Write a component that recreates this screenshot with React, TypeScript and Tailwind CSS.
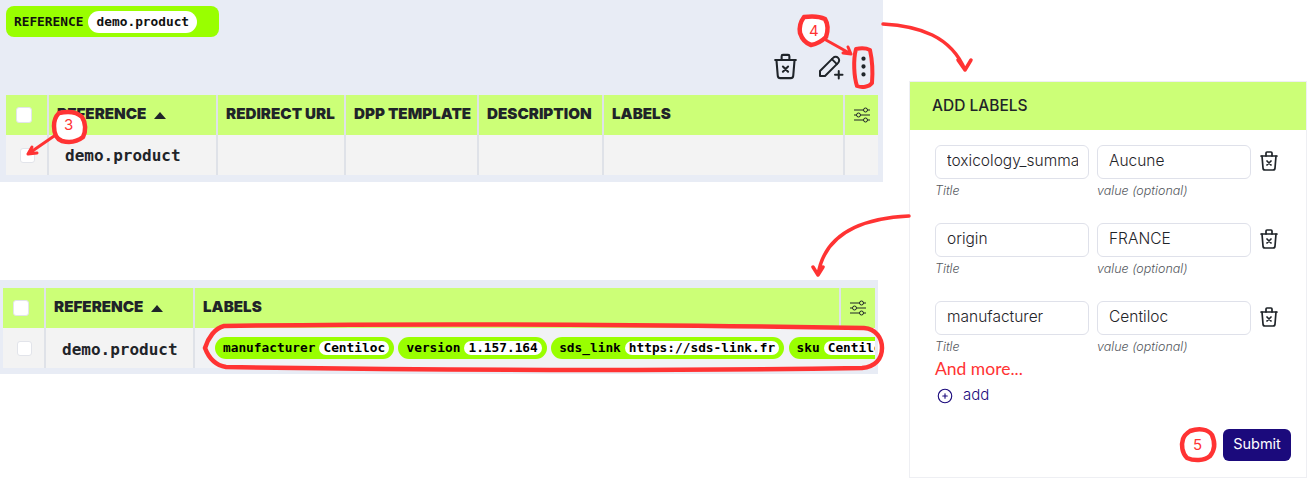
import { TbCirclePlus, TbDotsVertical, TbPencilPlus, TbTrashX } from 'react-icons/tb';

const HEADER_FONT = "font-['Inter',sans-serif] font-black text-[15.2px] text-[#1f2429]";
const MONO_FONT = "font-['DejaVu_Sans_Mono',monospace] font-bold";

const fields = [
  { title: 'toxicology_summary', value: 'Aucune' },
  { title: 'origin', value: 'FRANCE' },
  { title: 'manufacturer', value: 'Centiloc' },
];

const labels = [
  { name: 'manufacturer', value: 'Centiloc' },
  { name: 'version', value: '1.157.164' },
  { name: 'sds_link', value: 'https://sds-link.fr' },
  { name: 'sku', value: 'Centiloc' },
];

function Checkbox({ small }: { small?: boolean }) {
  return (
    <span
      className={
        small
          ? 'block h-[15px] w-[15px] rounded-[3px] border border-[#e2e4ea] bg-white'
          : 'ml-[2px] mt-[1px] block h-[16px] w-[16px] rounded-[3px] border border-[#e2e4ea] bg-white'
      }
    />
  );
}

function SortArrow() {
  return <span className="ml-[8px] mt-[1px] h-0 w-0 border-x-[6px] border-b-[7px] border-x-transparent border-b-[#1f2429]" />;
}

function SlidersIcon() {
  return (
    <svg className="mt-[1px]" width="18" height="16" viewBox="0 0 18 16" fill="none" stroke="#1f2429" strokeWidth="1">
      <path d="M1 3h9.5M14.5 3H17M1 8h2.5M7.5 8H17M1 13h9.5M14.5 13H17" />
      <circle cx="12.5" cy="3" r="2" />
      <circle cx="5.5" cy="8" r="2" />
      <circle cx="12.5" cy="13" r="2" />
    </svg>
  );
}

function HeaderCell({ children }: { children?: React.ReactNode }) {
  return <div className={`flex h-[40px] items-center bg-[#ccff77] pb-[1px] pl-[8px] ${HEADER_FONT}`}>{children}</div>;
}

function BodyCell({ children }: { children?: React.ReactNode }) {
  return <div className="flex h-[40px] items-center overflow-hidden bg-[#f3f3f3]">{children}</div>;
}

function LabelPill({ name, value }: { name: string; value: string }) {
  return (
    <span className={`flex h-[22px] shrink-0 items-center rounded-full bg-[#99ff00] pl-[8px] pr-[5px] text-[12.8px] text-black ${MONO_FONT}`}>
      {name}
      <span className="ml-[4px] rounded-full bg-white px-[4px] leading-[14px]">{value}</span>
    </span>
  );
}

function TextField({ value, hint }: { value: string; hint: string }) {
  return (
    <div className="w-[154px]">
      <div className="flex h-[34px] items-center rounded-md border border-[#dfe1ea] bg-white pb-[2px] pl-[11px] pr-[10px]">
        <input readOnly value={value} className="w-full min-w-0 bg-transparent text-[15.5px] font-light text-[#1f2429] outline-none" />
      </div>
      <div className="mt-[3px] text-[12.5px] font-light italic leading-[18px] text-[#55595e]">{hint}</div>
    </div>
  );
}

function LabelRow({ title, value }: { title: string; value: string }) {
  return (
    <div className="flex h-[78px] items-start gap-[8px]">
      <TextField value={title} hint="Title" />
      <TextField value={value} hint="value (optional)" />
      <TbTrashX className="-ml-[2px] mt-[4px]" size={24} strokeWidth={1.7} color="#1f2429" />
    </div>
  );
}

// hand drawn annotations on top of the screenshot
function Annotations() {
  return (
    <svg className="pointer-events-none absolute left-0 top-0" width="1312" height="482" fill="none" stroke="#ff3333" strokeLinecap="round" strokeLinejoin="round">
      {/* 3 */}
      <path d="M57 134 28 154M28 154l9-1M28 154l4-7" strokeWidth="3" />
      <path d="M59 113c9-2 18-1 23 4 4 6 4 14 1 20-5 4-13 6-21 4-6-2-8-8-8-15 0-5 2-10 5-13Z" fill="#ffffff" strokeWidth="4.5" />
      <text x="64" y="130" fill="#ff3333" stroke="none" fontSize="15" fontFamily="Inter,sans-serif">3</text>
      {/* 4 */}
      <path d="M826 40 851 54M851 54l-8-1M851 54l-3-7" strokeWidth="3" />
      <path d="M804 17c7-1 15-1 21 2 3 5 3 12 1 18-4 4-9 7-15 8-6-2-9-6-11-12-1-6 1-12 4-16Z" fill="#ffffff" strokeWidth="4.5" />
      <text x="809" y="36" fill="#ff3333" stroke="none" fontSize="15" fontFamily="Inter,sans-serif">4</text>
      <path d="M856 49c5-1 10-1 14 1 2 9 3 21 2 33-3 4-10 5-15 3-3-9-4-26-1-37Z" strokeWidth="4" />
      {/* arrow to the form */}
      <path d="M883 24c36 2 68 12 82 46M958 60l7 10 6-10" strokeWidth="3.5" />
      {/* arrow to the labels */}
      <path d="M909 216c-42 2-84 14-91 59M813 267l5 8 5-8" strokeWidth="3.5" />
      {/* labels outline */}
      <path d="M224 326c200-3 450-1 640 2 12 1 18 10 18 20 0 11-7 19-20 20-200 3-440 2-636-1-12-2-18-11-21-19 3-10 10-20 19-22Z" strokeWidth="4.5" />
      {/* 5 */}
      <path d="M1190 431c9-3 18-2 22 4 3 7 3 15-2 21-6 5-16 5-23 2-5-5-6-13-4-19 1-3 4-6 7-8Z" fill="#ffffff" strokeWidth="4.5" />
      <text x="1193" y="450" fill="#ff3333" stroke="none" fontSize="15" fontFamily="Inter,sans-serif">5</text>
    </svg>
  );
}

export default function App() {
  return (
    <div className="relative flex h-[482px] w-[1312px] overflow-hidden bg-white font-['Inter',sans-serif]">
      <div className="flex w-[883px] shrink-0 flex-col">
        <div className="flex h-[182px] flex-col bg-[#e8ecf5] px-[6px] pt-[6px]">
          <div className={`flex h-[31px] w-[213px] items-center rounded-lg bg-[#99ff00] pl-[8px] text-[12.8px] text-[#111] ${MONO_FONT}`}>
            REFERENCE
            <span className="ml-[5px] flex h-[22px] w-[109px] items-center justify-center rounded-full bg-white">demo.product</span>
          </div>

          <div className="flex h-[58px] items-center justify-end text-[#1f2429]">
            <TbTrashX size={31} strokeWidth={1.6} />
            <TbPencilPlus className="ml-[14px]" size={30} strokeWidth={1.6} />
            <TbDotsVertical className="ml-[5px]" size={27} strokeWidth={1.8} />
          </div>

          <div className="grid w-[872px] grid-cols-[41px_167px_126px_131px_123px_239px_1fr] gap-x-[2px] bg-[#dfe2e8]">
            <HeaderCell>
              <Checkbox />
            </HeaderCell>
            <HeaderCell>
              REFERENCE
              <SortArrow />
            </HeaderCell>
            <HeaderCell>REDIRECT URL</HeaderCell>
            <HeaderCell>DPP TEMPLATE</HeaderCell>
            <HeaderCell>DESCRIPTION</HeaderCell>
            <HeaderCell>LABELS</HeaderCell>
            <HeaderCell>
              <SlidersIcon />
            </HeaderCell>
            <BodyCell>
              <span className="ml-[14px]">
                <Checkbox small />
              </span>
            </BodyCell>
            <BodyCell>
              <span className={`ml-[16px] pt-[2px] text-[16px] text-[#1f2429] ${MONO_FONT}`}>demo.product</span>
            </BodyCell>
            <BodyCell />
            <BodyCell />
            <BodyCell />
            <BodyCell />
            <BodyCell />
          </div>
        </div>

        <div className="mt-[98px] h-[94px] w-[878px] bg-[#e8ecf5] px-[3px] pt-[8px]">
          <div className="grid w-[872px] grid-cols-[41px_147px_1fr_34px] gap-x-[2px] bg-[#dfe2e8]">
            <HeaderCell>
              <Checkbox />
            </HeaderCell>
            <HeaderCell>
              REFERENCE
              <SortArrow />
            </HeaderCell>
            <HeaderCell>LABELS</HeaderCell>
            <HeaderCell>
              <SlidersIcon />
            </HeaderCell>
            <BodyCell>
              <span className="ml-[14px]">
                <Checkbox small />
              </span>
            </BodyCell>
            <BodyCell>
              <span className={`ml-[16px] pt-[3px] text-[16px] text-[#1f2429] ${MONO_FONT}`}>demo.product</span>
            </BodyCell>
            <div className="col-span-2 flex h-[40px] items-center gap-[4.4px] overflow-hidden bg-[#f1f2f5] pl-[20px]">
              {labels.map((label) => (
                <LabelPill key={label.name} name={label.name} value={label.value} />
              ))}
            </div>
          </div>
        </div>
      </div>

      <div className="ml-[26px] mt-[81px] flex h-[397px] w-[398px] flex-col border border-[#eeeff3] bg-white">
        <div className="flex h-[48px] shrink-0 items-center bg-[#ccff77] pl-[22px] text-[15.5px] font-medium text-[#1f2429]">ADD LABELS</div>
        <div className="flex flex-1 flex-col pl-[25px] pr-[15px] pt-[15px]">
          {fields.map((field) => (
            <LabelRow key={field.title} title={field.title} value={field.value} />
          ))}
          <div className="-mt-[22px] font-['Lato',sans-serif] text-[17.5px] leading-[24px] text-[#ff3333]">And more...</div>
          <div className="mt-[4px] flex items-center text-[15px] font-light text-[#1b0a7c]">
            <TbCirclePlus className="ml-[1px]" size={18} strokeWidth={1.5} />
            <span className="ml-[9px] -translate-y-[1px]">add</span>
          </div>
          <div className="mt-[21px] flex justify-end">
            <button className="h-[32px] w-[68px] rounded-md bg-[#1b0a7c] pb-[2px] text-[14.5px] text-white">Submit</button>
          </div>
        </div>
      </div>

      <Annotations />
    </div>
  );
}
